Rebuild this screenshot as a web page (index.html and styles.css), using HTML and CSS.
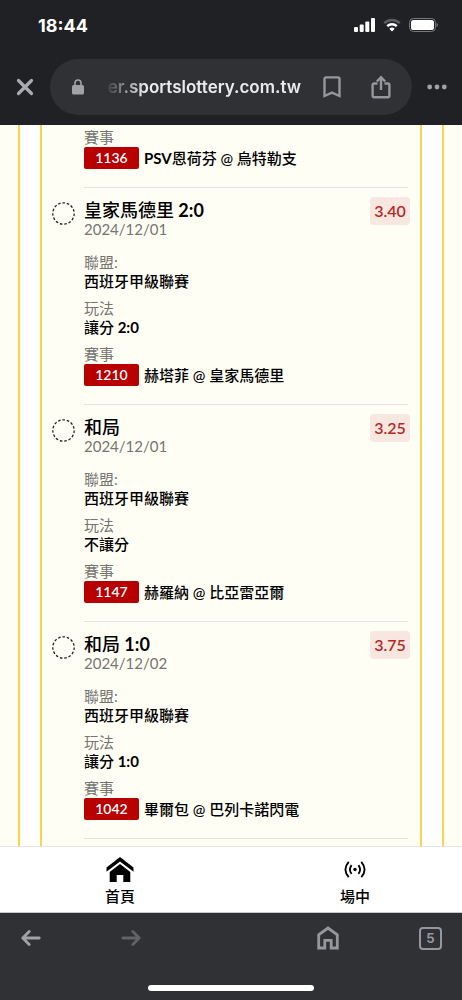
FILE: index.html
```
<!DOCTYPE html>
<html lang="zh-Hant">
<head>
<meta charset="utf-8">
<meta name="viewport" content="width=device-width, initial-scale=1">
<title>sportslottery.com.tw</title>
<link rel="stylesheet" href="styles.css">
</head>
<body>
<header class="browser">
  <div class="status">
    <span class="clock">18:44</span>
    <span class="status-icons">
      <svg width="21" height="14" viewBox="0 0 21 14" fill="#fff"><rect x="0" y="9" width="4" height="5" rx="1"/><rect x="5.7" y="6.5" width="4" height="7.5" rx="1"/><rect x="11.3" y="3.5" width="4" height="10.5" rx="1"/><rect x="17" y="0" width="4" height="14" rx="1"/></svg>
      <svg width="18" height="14" viewBox="0 0 18 14" fill="none" stroke-width="2.4"><path d="M1.2 5.2a11.2 11.2 0 0 1 15.6 0" stroke="#5c5d60"/><path d="M4.2 8.2a7 7 0 0 1 9.6 0" stroke="#fff"/><path d="M9 13.5 6.3 10.7a4 4 0 0 1 5.4 0z" fill="#fff"/></svg>
      <svg width="29" height="14" viewBox="0 0 29 14"><rect x=".5" y=".5" width="26" height="13" rx="4" fill="none" stroke="#77787b"/><rect x="2" y="2" width="23" height="10" rx="2.6" fill="#fff"/><path d="M27.6 4.8q1.4.8 1.4 2.2t-1.4 2.2z" fill="#77787b"/></svg>
    </span>
  </div>
  <div class="address-row">
    <button class="icon-button" type="button" aria-label="關閉"><svg width="18" height="18" viewBox="0 0 18 18" fill="none" stroke="#a9abb0" stroke-width="3.2" stroke-linecap="round"><path d="M2.5 2.5l13 13M15.5 2.5l-13 13"/></svg></button>
    <div class="address">
      <svg class="lock" width="12" height="16" viewBox="0 0 12 16"><path d="M3 7V4a3 3 0 0 1 6 0v3" fill="none" stroke="#a0a2a6" stroke-width="1.6"/><rect y="6" width="12" height="9.6" rx="1.6" fill="#a0a2a6"/></svg>
      <button class="url" type="button"><span>er.sportslottery.com.tw</span></button>
      <button class="icon-button bookmark" type="button" aria-label="書籤"><svg width="18" height="22" viewBox="0 0 18 22" fill="none" stroke="#95979c" stroke-width="2.4"><path d="M1.5 20V3q0-1.6 1.6-1.6h11.8q1.6 0 1.6 1.6v17L9 16.6z"/></svg></button>
      <button class="icon-button" type="button" aria-label="分享"><svg width="20" height="24" viewBox="0 0 20 24" fill="none" stroke="#95979c" stroke-width="2.4"><path d="M6.5 8.5H3.2q-1.6 0-1.6 1.6v10.4q0 1.8 1.6 1.8h13.6q1.6 0 1.6-1.8V10.1q0-1.6-1.6-1.6h-3.3M10 15V2.5M5.8 6.5 10 2.3l4.2 4.2"/></svg></button>
    </div>
    <button class="icon-button" type="button" aria-label="更多"><svg width="20" height="6" viewBox="0 0 20 6" fill="#a0a2a6"><circle cx="2.7" cy="3" r="2.4"/><circle cx="10" cy="3" r="2.4"/><circle cx="17.3" cy="3" r="2.4"/></svg></button>
  </div>
</header>

<main class="page">
  <div class="frame">
    <div class="slip">
      <section class="bet bet-clipped">
        <div class="bet-body">
          <dl class="details">
            <dt>賽事</dt>
            <dd class="match"><span class="code">1136</span><span><b>PSV</b>恩荷芬 @ 烏特勒支</span></dd>
          </dl>
        </div>
      </section>

      <section class="bet">
        <label class="pick" for="bet-1210"><input id="bet-1210" type="checkbox" aria-label="皇家馬德里 2:0"><svg width="23" height="23" viewBox="0 0 23 23"><circle cx="11.5" cy="11.5" r="10.7" pathLength="75"/></svg></label>
        <div class="bet-body">
          <div class="bet-head"><div><h2>皇家馬德里<b> 2:0</b></h2><time>2024/12/01</time></div><span class="odds">3.40</span></div>
          <dl class="details">
            <dt>聯盟:</dt><dd>西班牙甲級聯賽</dd>
            <dt>玩法</dt><dd>讓分<b> 2:0</b></dd>
            <dt>賽事</dt><dd class="match"><span class="code">1210</span>赫塔菲 @ 皇家馬德里</dd>
          </dl>
        </div>
      </section>

      <section class="bet">
        <label class="pick" for="bet-1147"><input id="bet-1147" type="checkbox" aria-label="和局"><svg width="23" height="23" viewBox="0 0 23 23"><circle cx="11.5" cy="11.5" r="10.7" pathLength="75"/></svg></label>
        <div class="bet-body">
          <div class="bet-head"><div><h2>和局</h2><time>2024/12/01</time></div><span class="odds">3.25</span></div>
          <dl class="details">
            <dt>聯盟:</dt><dd>西班牙甲級聯賽</dd>
            <dt>玩法</dt><dd>不讓分</dd>
            <dt>賽事</dt><dd class="match"><span class="code">1147</span>赫羅納 @ 比亞雷亞爾</dd>
          </dl>
        </div>
      </section>

      <section class="bet">
        <label class="pick" for="bet-1042"><input id="bet-1042" type="checkbox" aria-label="和局 1:0"><svg width="23" height="23" viewBox="0 0 23 23"><circle cx="11.5" cy="11.5" r="10.7" pathLength="75"/></svg></label>
        <div class="bet-body">
          <div class="bet-head"><div><h2>和局<b> 1:0</b></h2><time>2024/12/02</time></div><span class="odds">3.75</span></div>
          <dl class="details">
            <dt>聯盟:</dt><dd>西班牙甲級聯賽</dd>
            <dt>玩法</dt><dd>讓分<b> 1:0</b></dd>
            <dt>賽事</dt><dd class="match"><span class="code">1042</span>畢爾包 @ 巴列卡諾閃電</dd>
          </dl>
        </div>
      </section>
    </div>
  </div>
</main>

<nav class="tabs">
  <a href="#home"><svg width="28" height="26" viewBox="0 0 28 26"><path d="M14 0 27.5 10.5v4.3L14 4.4.5 14.8v-4.3z"/><path d="M14 7l10.3 8v10h-7v-7h-6.6v7h-7V15z"/></svg>首頁</a>
  <a href="#live"><svg width="22" height="26" viewBox="0 0 22 26" fill="none" stroke="#000" stroke-width="1.8"><circle cx="11" cy="12.5" r="1.7" fill="#000" stroke="none"/><path d="M7.6 8.1q-3.4 4.4 0 8.8M14.4 8.1q3.4 4.4 0 8.8M4.7 4.8q-6.6 7.7 0 15.4M17.3 4.8q6.6 7.7 0 15.4"/></svg>場中</a>
</nav>

<footer class="toolbar">
  <div class="tools">
    <button class="icon-button" type="button" aria-label="上一頁"><svg width="20" height="16" viewBox="0 0 20 16" fill="none" stroke="#a0a2a6" stroke-width="2.8" stroke-linecap="round" stroke-linejoin="round"><path d="M18.2 8H2M8.2 1.6 1.8 8l6.4 6.4"/></svg></button>
    <button class="icon-button" type="button" aria-label="下一頁"><svg width="20" height="16" viewBox="0 0 20 16" fill="none" stroke="#626366" stroke-width="2.8" stroke-linecap="round" stroke-linejoin="round"><path d="M1.8 8H18M11.8 1.6 18.2 8l-6.4 6.4"/></svg></button>
    <span class="tool-space"></span>
    <button class="icon-button" type="button" aria-label="首頁"><svg width="22" height="24" viewBox="0 0 22 24" fill="none" stroke="#95979c" stroke-width="2.8"><path d="M1.7 22V8.8L11 2l9.3 6.8V22h-6.1v-7.6H7.8V22z"/></svg></button>
    <button class="tab-count" type="button" aria-label="分頁 5">5</button>
  </div>
  <div class="home-indicator"></div>
</footer>
</body>
</html>
```
FILE: styles.css
```
* { box-sizing: border-box; }

body {
  display: flex;
  flex-direction: column;
  height: 100vh;
  margin: 0;
  font-family: Lato, "Noto Sans CJK TC", sans-serif;
  font-size: 15px;
  line-height: 19px;
  color: #000;
  background: #303134;
}

button {
  margin: 0;
  padding: 0;
  border: 0;
  background: none;
  font: inherit;
}

svg { display: block; flex: none; }

b { font-weight: 700; }

.browser {
  flex: none;
  padding-bottom: 10px;
  background: #202124;
  font-family: Inter, sans-serif;
}

.status {
  display: flex;
  align-items: center;
  justify-content: space-between;
  height: 50px;
  padding: 0 24px 0 38px;
}

.clock { font-size: 18px; font-weight: 700; color: #fff; }

.status-icons { display: flex; gap: 8px; }

.address-row {
  display: grid;
  grid-template-columns: 50px 1fr 50px;
  margin-top: 9px;
}

.icon-button { display: grid; place-items: center; }

.address {
  display: flex;
  align-items: center;
  height: 56px;
  padding: 0 21px 0 22px;
  border-radius: 28px;
  background: #303134;
}

.url {
  display: flex;
  flex: 1;
  justify-content: flex-end;
  min-width: 0;
  margin: 0 22px 0 20px;
  overflow: hidden;
  font-size: 17px;
  font-weight: 600;
  line-height: 24px;
  color: #e8eaed;
  -webkit-mask-image: linear-gradient(to right, transparent, #000 40px);
  mask-image: linear-gradient(to right, transparent, #000 40px);
}

.bookmark { margin-right: 30px; }

.page {
  flex: 1;
  min-height: 0;
  overflow: hidden;
  padding: 0 18px;
  background: #fffef5;
}

.frame {
  padding: 0 20px;
  border: solid #fcd34a;
  border-width: 0 2px;
  background: #fff;
}

.slip {
  padding: 0 12px 20px 10px;
  border: solid #fcd34a;
  border-width: 0 2px;
  background: #fffef5;
}

.bet {
  display: grid;
  grid-template-columns: 23px 1fr;
  column-gap: 9px;
}

.pick {
  display: grid;
  height: 23px;
  margin-top: 14px;
}

.pick input,
.pick svg { grid-area: 1 / 1; }

.pick input {
  appearance: none;
  width: 23px;
  height: 23px;
  margin: 0;
  border-radius: 50%;
}

.pick circle {
  fill: none;
  stroke: #222;
  stroke-width: 1.3;
  stroke-dasharray: 2.9 2.1;
}

.pick input:checked + svg circle { fill: #b80000; }

.bet-body {
  grid-column: 2;
  padding: 12px 0 18px;
  border-bottom: 1px solid #e3e3dd;
}

.bet-clipped .bet-body { padding-top: 3px; }

.bet-head {
  display: flex;
  justify-content: space-between;
  margin-bottom: 15px;
}

h2 {
  margin: 0;
  font-size: 18px;
  font-weight: 500;
  line-height: 20px;
}

time {
  display: block;
  line-height: 18px;
  color: #757572;
}

.odds {
  width: 40px;
  height: 28px;
  margin: -3px -2px 0 0;
  border-radius: 4px;
  background: #f8e6e0;
  font-size: 16px;
  font-weight: 600;
  line-height: 28px;
  text-align: center;
  color: #b42a24;
}

.details { margin: 0; }

dt { color: #757572; }

dd { margin: 0; font-weight: 500; }

dd + dt { margin-top: 8px; }

.match {
  display: flex;
  align-items: center;
  gap: 5px;
  height: 22px;
  white-space: nowrap;
}

.code {
  width: 55px;
  height: 22px;
  border-radius: 2px;
  background: #b80000;
  font-size: 14px;
  font-weight: 600;
  line-height: 22px;
  text-align: center;
  color: #fff;
}

.tabs {
  display: grid;
  flex: none;
  grid-template-columns: 1fr 1fr;
  column-gap: 35px;
  height: 67px;
  padding: 0 7px 0 20px;
  border-top: 1px solid #e4e4e0;
  border-bottom: 1px solid #c8c8c8;
  background: #fff;
}

.tabs a {
  display: flex;
  flex-direction: column;
  align-items: center;
  gap: 4px;
  padding-top: 10px;
  font-weight: 500;
  color: #000;
  text-decoration: none;
}

.toolbar {
  display: flex;
  flex: none;
  flex-direction: column;
  align-items: center;
  justify-content: space-between;
  height: 87px;
  padding-bottom: 9px;
  background: #303134;
  font-family: Inter, sans-serif;
}

.tools {
  display: flex;
  align-items: center;
  justify-content: space-between;
  width: 100%;
  height: 50px;
  padding: 0 20px 0 21px;
}

.tool-space { width: 16px; }

.tab-count {
  width: 23px;
  height: 23px;
  border: 2px solid #95979c;
  border-radius: 4px;
  font-size: 13px;
  font-weight: 700;
  line-height: 18px;
  color: #95979c;
}

.home-indicator {
  width: 36%;
  height: 6px;
  border-radius: 3px;
  background: #fff;
}
```
